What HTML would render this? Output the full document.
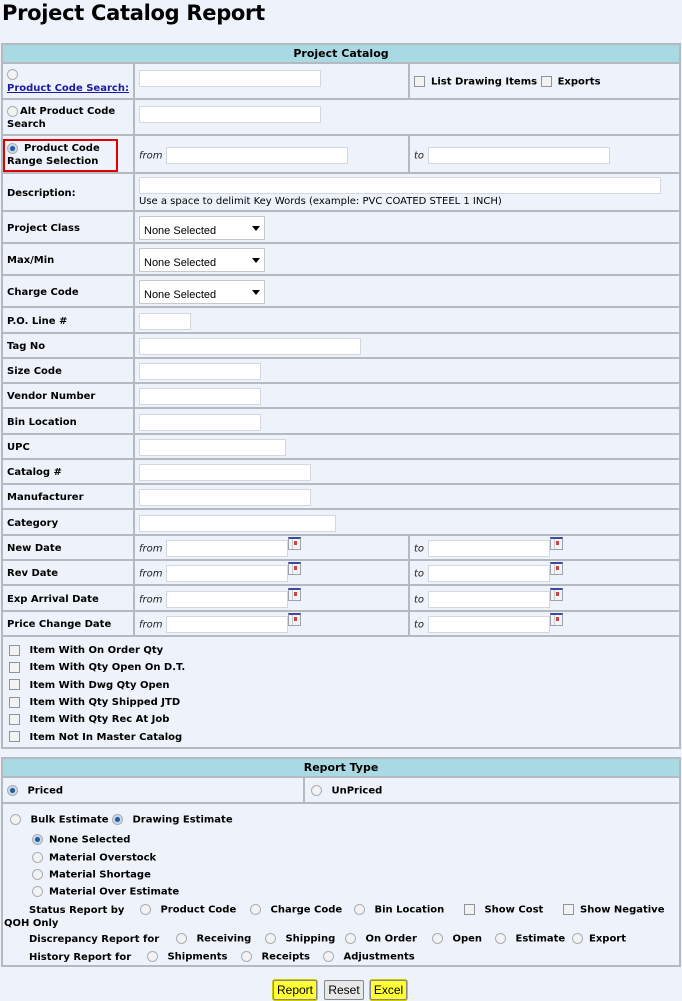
<!DOCTYPE html>
<html><head><meta charset="utf-8"><style>
body{margin:0;background:#eef3fb;font-family:"DejaVu Sans","Liberation Sans",sans-serif;font-size:10px;font-weight:bold;color:#000;width:682px;height:1001px;overflow:hidden;position:relative}
h1{position:absolute;left:2px;top:1px;margin:0;font-size:21px;font-weight:bold;font-family:"DejaVu Sans",sans-serif;letter-spacing:-0.3px}
table{position:absolute;left:1px;border-collapse:collapse;table-layout:fixed;width:678px}
td{border:2px solid #b5b9c0;padding:2px 0 0 4px;vertical-align:middle;overflow:hidden;white-space:nowrap}
th{background:#a9d9e3;border:2px solid #b5b9c0;font-size:11px;height:17px;padding:0}
.in{display:inline-block;background:#fff;border:1px solid #d4d8de;height:15px;vertical-align:middle}
.it{font-style:italic;font-weight:normal;font-size:10px;color:#222}
.cal{display:inline-block;width:11px;height:10px;border:1px solid #9aa3b3;border-top:2px solid #3a4aa0;background:linear-gradient(90deg,transparent 3px,#ccc 3px,#ccc 4px,transparent 4px),#f3f3f3;vertical-align:top;margin-top:-3px;position:relative}
.cal:after{content:"";position:absolute;left:5px;top:2px;width:3px;height:4px;background:#c44}
.sel{display:inline-block;background:#fff;border:1px solid #c8c8c8;width:126px;height:24px;font-weight:normal;font-size:11px;line-height:28px;padding-left:4px;box-sizing:border-box;position:relative;font-family:"Liberation Sans",sans-serif}
.sel:after{content:"";position:absolute;right:4px;top:9px;border:4px solid transparent;border-top:5px solid #000}
.r{display:inline-block;width:9px;height:9px;border-radius:50%;border:1px solid #a9aeb5;background:#f3f3f3;vertical-align:middle;margin-right:6px}
.r.on{background:radial-gradient(circle,#1f5fa8 35%,#cfd8e6 45%)}
.c{display:inline-block;width:9px;height:9px;border:1px solid #8f959c;background:#f3f3f3;vertical-align:middle;margin-right:6px}
.abs{position:absolute;white-space:nowrap}
.btn{position:absolute;top:980px;height:18px;border:1px solid #888;font:normal 12px "Liberation Sans",sans-serif;line-height:18px;text-align:center;background:#e8e8e8;border-radius:2px}
.y{background:#ffff33;box-shadow:0 0 0 1px #cccc00}
</style></head><body>
<h1>Project Catalog Report</h1>
<table style="top:43px">
<colgroup><col style="width:132px"><col style="width:275px"><col style="width:271px"></colgroup>
<tr><th colspan="3">Project Catalog</th></tr>
<tr style="height:36px"><td style="line-height:14px"><span class="r"></span><br><span style="color:#1a1aa6;text-decoration:underline">Product Code Search:</span></td><td><span class="in" style="width:180px;margin-top:-6px"></span></td><td><span class="c"></span>List Drawing Items <span class="c"></span>Exports</td></tr>
<tr style="height:36px"><td style="line-height:13px"><span class="r" style="margin-right:2px"></span>Alt Product Code<br>Search</td><td colspan="2"><span class="in" style="width:180px;margin-top:-6px"></span></td></tr>
<tr style="height:38px"><td style="line-height:13px;position:relative"><div style="position:absolute;left:0px;top:3px;width:111px;height:29px;border:2px solid #e10000"></div><span class="r on"></span>Product Code<br>Range Selection</td><td><span class="it">from</span> <span class="in" style="width:180px"></span></td><td><span class="it">to</span> <span class="in" style="width:180px"></span></td></tr>
<tr style="height:38px"><td>Description:</td><td colspan="2" style="font-weight:normal;line-height:15px"><span class="in" style="width:520px"></span><br>Use a space to delimit Key Words (example: PVC COATED STEEL 1 INCH)</td></tr>
<tr style="height:32px"><td>Project Class</td><td colspan="2"><span class="sel">None Selected</span></td></tr>
<tr style="height:32px"><td>Max/Min</td><td colspan="2"><span class="sel">None Selected</span></td></tr>
<tr style="height:32px"><td>Charge Code</td><td colspan="2"><span class="sel">None Selected</span></td></tr>
<tr style="height:26px"><td>P.O. Line #</td><td colspan="2"><span class="in" style="width:50px"></span></td></tr>
<tr style="height:25px"><td>Tag No</td><td colspan="2"><span class="in" style="width:220px"></span></td></tr>
<tr style="height:25px"><td>Size Code</td><td colspan="2"><span class="in" style="width:120px"></span></td></tr>
<tr style="height:25px"><td>Vendor Number</td><td colspan="2"><span class="in" style="width:120px"></span></td></tr>
<tr style="height:26px"><td>Bin Location</td><td colspan="2"><span class="in" style="width:120px"></span></td></tr>
<tr style="height:25px"><td>UPC</td><td colspan="2"><span class="in" style="width:145px"></span></td></tr>
<tr style="height:25px"><td>Catalog #</td><td colspan="2"><span class="in" style="width:170px"></span></td></tr>
<tr style="height:25px"><td>Manufacturer</td><td colspan="2"><span class="in" style="width:170px"></span></td></tr>
<tr style="height:26px"><td>Category</td><td colspan="2"><span class="in" style="width:195px"></span></td></tr>
<tr style="height:25px"><td>New Date</td><td><span class="it">from</span> <span class="in" style="width:120px"></span><span class="cal"></span></td><td><span class="it">to</span> <span class="in" style="width:120px"></span><span class="cal"></span></td></tr>
<tr style="height:25px"><td>Rev Date</td><td><span class="it">from</span> <span class="in" style="width:120px"></span><span class="cal"></span></td><td><span class="it">to</span> <span class="in" style="width:120px"></span><span class="cal"></span></td></tr>
<tr style="height:26px"><td>Exp Arrival Date</td><td><span class="it">from</span> <span class="in" style="width:120px"></span><span class="cal"></span></td><td><span class="it">to</span> <span class="in" style="width:120px"></span><span class="cal"></span></td></tr>
<tr style="height:25px"><td>Price Change Date</td><td><span class="it">from</span> <span class="in" style="width:120px"></span><span class="cal"></span></td><td><span class="it">to</span> <span class="in" style="width:120px"></span><span class="cal"></span></td></tr>
<tr style="height:112px"><td colspan="3" style="line-height:17.3px;padding-left:6px;padding-top:4px"><span class="c"></span>&nbsp;Item With On Order Qty<br><span class="c"></span>&nbsp;Item With Qty Open On D.T.<br><span class="c"></span>&nbsp;Item With Dwg Qty Open<br><span class="c"></span>&nbsp;Item With Qty Shipped JTD<br><span class="c"></span>&nbsp;Item With Qty Rec At Job<br><span class="c"></span>&nbsp;Item Not In Master Catalog</td></tr>
</table>
<table style="top:757px">
<colgroup><col style="width:302px"><col style="width:376px"></colgroup>
<tr><th colspan="2">Report Type</th></tr>
<tr style="height:26px"><td><span class="r on"></span>&nbsp;Priced</td><td style="padding-left:6px"><span class="r"></span>&nbsp;UnPriced</td></tr>
<tr style="height:163px"><td colspan="2"></td></tr>
</table>
<div class="abs" style="left:10px;top:814px"><span class="r"></span>&nbsp;Bulk Estimate <span class="r on"></span>&nbsp;Drawing Estimate</div>
<div class="abs" style="left:32px;top:834px"><span class="r on"></span>None Selected</div>
<div class="abs" style="left:32px;top:852px"><span class="r"></span>Material Overstock</div>
<div class="abs" style="left:32px;top:869px"><span class="r"></span>Material Shortage</div>
<div class="abs" style="left:32px;top:886px"><span class="r"></span>Material Over Estimate</div>
<div class="abs" style="left:29px;top:905px">Status Report by</div>
<div class="abs" style="left:140px;top:904px"><span class="r"></span>&nbsp;Product Code</div>
<div class="abs" style="left:250px;top:904px"><span class="r"></span>&nbsp;Charge Code</div>
<div class="abs" style="left:354px;top:904px"><span class="r"></span>&nbsp;Bin Location</div>
<div class="abs" style="left:464px;top:904px"><span class="c"></span>&nbsp;Show Cost</div>
<div class="abs" style="left:563px;top:904px"><span class="c"></span>Show Negative</div>
<div class="abs" style="left:4px;top:918px">QOH Only</div>
<div class="abs" style="left:29px;top:934px">Discrepancy Report for</div>
<div class="abs" style="left:176px;top:933px"><span class="r"></span>&nbsp;Receiving</div>
<div class="abs" style="left:265px;top:933px"><span class="r"></span>&nbsp;Shipping</div>
<div class="abs" style="left:345px;top:933px"><span class="r"></span>&nbsp;On Order</div>
<div class="abs" style="left:432px;top:933px"><span class="r"></span>&nbsp;Open</div>
<div class="abs" style="left:495px;top:933px"><span class="r"></span>&nbsp;Estimate</div>
<div class="abs" style="left:572px;top:933px"><span class="r"></span>Export</div>
<div class="abs" style="left:29px;top:952px">History Report for</div>
<div class="abs" style="left:147px;top:951px"><span class="r"></span>&nbsp;Shipments</div>
<div class="abs" style="left:241px;top:951px"><span class="r"></span>&nbsp;Receipts</div>
<div class="abs" style="left:323px;top:951px"><span class="r"></span>&nbsp;Adjustments</div>
<div class="btn y" style="left:273px;width:42px">Report</div>
<div class="btn" style="left:324px;width:38px">Reset</div>
<div class="btn y" style="left:370px;width:35px">Excel</div>
</body></html>
